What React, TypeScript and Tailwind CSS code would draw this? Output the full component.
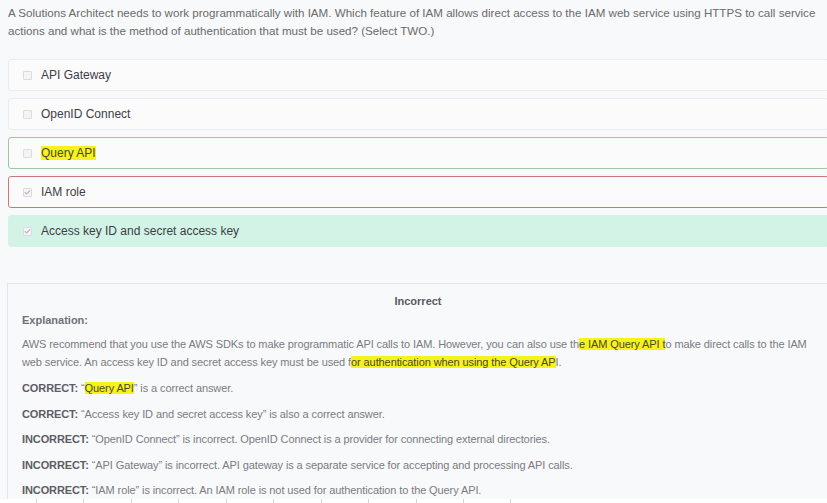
import { Check } from 'lucide-react'

type Option = { label: string; state: 'plain' | 'correct' | 'wrong' | 'answer'; checked?: boolean; mark?: boolean }

const OPTIONS: Option[] = [
  { label: 'API Gateway', state: 'plain' },
  { label: 'OpenID Connect', state: 'plain' },
  { label: 'Query API', state: 'correct', mark: true },
  { label: 'IAM role', state: 'wrong', checked: true },
  { label: 'Access key ID and secret access key', state: 'answer', checked: true },
]

const BOX: Record<Option['state'], string> = {
  plain: 'border-[#ececef] bg-[#fbfbfc]',
  correct: 'border-[#9cc99c] bg-[#fbfbfc]',
  wrong: 'border-[#c9777a] bg-[#fbfbfc]',
  answer: 'border-[#d2f3e6] bg-[#d2f3e6]',
}

const TICKS = [36, 83, 131, 178, 226, 273, 321, 368, 416, 463, 510]

function Mark({ children }: { children: React.ReactNode }) {
  return <span className="bg-[#f7f21a] text-[#4a4a2a]">{children}</span>
}

export default function App() {
  return (
    <div className="w-[827px] h-[503px] overflow-hidden bg-[#f8f9fb] font-['Liberation_Sans','Inter',sans-serif] flex flex-col">
      <div className="w-[821px] ml-[8px] pt-[4px] text-[11.6px] leading-[18px] text-[#6a6a6a]">
        A Solutions Architect needs to work programmatically with IAM. Which feature of IAM allows direct access to the IAM web service using HTTPS to call service actions and what is the method of authentication that must be used? (Select TWO.)
      </div>

      <div className="mt-[19px] ml-[8px] w-[821px] flex flex-col gap-[7px]">
        {OPTIONS.map((o) => (
          <div key={o.label} className={`h-[32px] border rounded-[3px] flex items-center pl-[14px] ${BOX[o.state]}`}>
            <span className="w-[9px] h-[9px] border border-[#dcdcdf] bg-[#f4f4f6] rounded-[1px] flex items-center justify-center">
              {o.checked && <Check className="w-[7px] h-[7px] text-[#b9b9bd]" strokeWidth={4} />}
            </span>
            <span className="ml-[9px] text-[12px] text-[#3d3d45]">
              {o.mark ? <Mark>{o.label}</Mark> : o.label}
            </span>
          </div>
        ))}
      </div>

      <div className="mt-[36px] ml-[7px] w-[821px] flex-1 border-l border-t border-[#e6e6ea] bg-[#f8f9fb] px-[14px] text-[11px] text-[#7b7b82]">
        <div className="text-center font-semibold text-[#5a5a60] pt-[9px] leading-[16px]">Incorrect</div>
        <div className="font-semibold text-[#707077] mt-[3px] leading-[16px]">Explanation:</div>
        <p className="mt-[7px] leading-[18px] tracking-[-0.1px]">
          AWS recommend that you use the AWS SDKs to make programmatic API calls to IAM. However, you can also use th<Mark>e IAM Query API t</Mark>o make direct calls to the IAM web service. An access key ID and secret access key must be used f<Mark>or authentication when using the Query AP</Mark>I.
        </p>
        <div className="mt-[8px] flex flex-col gap-[7.5px] leading-[18px] tracking-[-0.1px]">
          <p><b className="font-semibold text-[#5d5d64]">CORRECT:</b> “<Mark>Query API</Mark>” is a correct answer.</p>
          <p><b className="font-semibold text-[#5d5d64]">CORRECT:</b> “Access key ID and secret access key” is also a correct answer.</p>
          <p><b className="font-semibold text-[#5d5d64]">INCORRECT:</b> “OpenID Connect” is incorrect. OpenID Connect is a provider for connecting external directories.</p>
          <p><b className="font-semibold text-[#5d5d64]">INCORRECT:</b> “API Gateway” is incorrect. API gateway is a separate service for accepting and processing API calls.</p>
          <p><b className="font-semibold text-[#5d5d64]">INCORRECT:</b> “IAM role” is incorrect. An IAM role is not used for authentication to the Query API.</p>
        </div>
      </div>

      <div className="h-[6px] shrink-0 bg-white flex">
        {TICKS.map((x, i) => (
          <span key={x} className="w-px h-full bg-[#d4d4d8]" style={{ marginLeft: i === 0 ? x : x - TICKS[i - 1] - 1 }} />
        ))}
      </div>
    </div>
  )
}
